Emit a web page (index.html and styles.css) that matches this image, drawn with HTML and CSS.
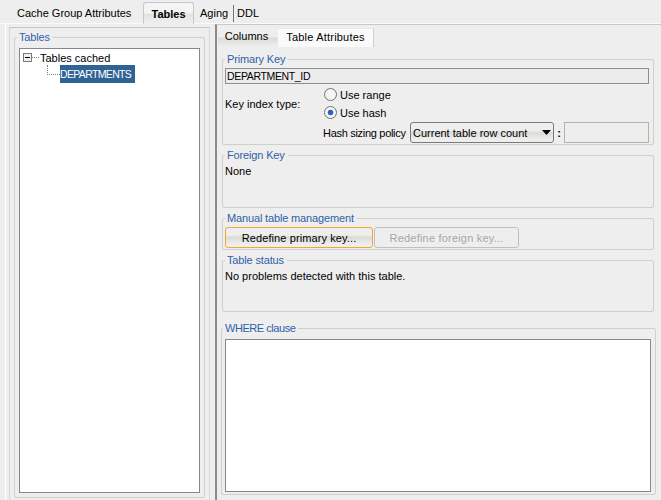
FILE: index.html
```html
<!DOCTYPE html>
<html lang="en">
<head>
  <meta charset="UTF-8">
  <title>Cache Group Attributes</title>
  <link rel="stylesheet" href="styles.css">
</head>
<body>
  <div class="top-tabs">
    <span class="top-tab first">Cache Group Attributes</span>
    <span class="top-tab active">Tables</span>
    <span class="top-tab aging">Aging</span>
    <span class="top-tab ddl">DDL</span>
  </div>

  <div class="main">
    <div class="left-pane">
      <div class="left-inner">
        <fieldset class="group tables-group">
          <legend>Tables</legend>
          <div class="tree">
            <div class="tree-root">
              <span class="expander"></span>
              <span class="dots-h"></span>
              <span>Tables cached</span>
            </div>
            <div class="tree-child">
              <span class="elbow"></span>
              <span class="selected">DEPARTMENTS</span>
            </div>
          </div>
        </fieldset>
      </div>
    </div>

    <div class="right-pane">
      <div class="sub-tabs">
        <span class="sub-tab">Columns</span>
        <span class="sub-tab active">Table Attributes</span>
      </div>

      <fieldset class="group pk-group">
        <legend>Primary Key</legend>
        <div class="pk-field">DEPARTMENT_ID</div>
        <div class="key-type">
          <span class="key-label">Key index type:</span>
          <div class="radios">
            <label class="radio-row"><span class="radio"></span>Use range</label>
            <label class="radio-row"><span class="radio on"></span>Use hash</label>
          </div>
        </div>
        <div class="hash-row">
          <span class="hash-label">Hash sizing policy</span>
          <div class="select">
            <span>Current table row count</span>
            <svg class="arrow" width="9" height="5" viewBox="0 0 9 5"><path d="M0 0h9L4.5 5z" fill="#000"/></svg>
          </div>
          <span class="colon">:</span>
          <div class="hash-input"></div>
        </div>
      </fieldset>

      <fieldset class="group fk-group">
        <legend>Foreign Key</legend>
        <div class="plain">None</div>
      </fieldset>

      <fieldset class="group manual-group">
        <legend>Manual table management</legend>
        <div class="buttons">
          <button class="btn focused">Redefine primary key...</button>
          <button class="btn disabled">Redefine foreign key...</button>
        </div>
      </fieldset>

      <fieldset class="group status-group">
        <legend>Table status</legend>
        <div class="plain">No problems detected with this table.</div>
      </fieldset>

      <fieldset class="group where-group">
        <legend>WHERE clause</legend>
        <div class="where-box"></div>
      </fieldset>
    </div>
  </div>
</body>
</html>
```

FILE: styles.css
```css
* {
  box-sizing: border-box;
}
html, body {
  margin: 0;
  height: 500px;
  overflow: hidden;
}
body {
  background: #eeeeee;
  color: #000;
  font-family: 'Liberation Sans', Arial, sans-serif;
  font-size: 11px;
}

/* outer tabs */
.top-tabs {
  display: flex;
  height: 24px;
  padding-top: 2px;
  border-bottom: 1px solid #fafafa;
}
.top-tab {
  line-height: 23px;
  white-space: nowrap;
}
.first {
  width: 126px;
  padding-left: 17px;
}
.top-tab.active {
  width: 51px;
  margin-left: 17px;
  margin-bottom: -1px;
  font-weight: bold;
  text-align: center;
  border: 1px solid #c8c8c8;
  border-bottom: none;
  border-radius: 3px 3px 0 0;
  background: linear-gradient(#f4f4f4 0, #f4f4f4 45%, #e3e3dd 55%, #eeeeee 90%);
}
.aging {
  margin-left: 6px;
  width: 33px;
}
.ddl {
  border-left: 1px solid #777;
  height: 17px;
  line-height: 17px;
  margin-top: 3px;
  padding-left: 3px;
}

/* panes */
.main {
  display: flex;
  height: 476px;
  padding-left: 5px;
}
.left-pane {
  width: 205px;
  padding: 3px 0 0 3px;
  border-left: 1px solid #fff;
}
.left-inner {
  height: 480px;
  padding-left: 4px;
  border: 1px solid #d8d8d8;
  border-top-color: #c4c4c4;
}
.right-pane {
  flex: 1;
  margin-left: 5px;
  border-left: 2px solid #8a8a8a;
  border-top: 1px solid #c8c8c8;
  padding-left: 4px;
}

/* group boxes */
.group {
  margin: 0;
  padding: 0;
  min-width: 0;
  border: 1px solid #d0d0c8;
  border-radius: 2px;
}
.group legend {
  padding: 0 3px 0 2px;
  margin-left: 0;
  color: #2f62a8;
  line-height: 14px;
  letter-spacing: -0.15px;
}
.tables-group {
  margin-top: 2px;
  width: 191px;
  height: 468px;
  padding: 4px 4px 0;
}
.tables-group legend {
  margin-left: -2px;
}
.tree {
  height: 445px;
  background: #fff;
  border: 1px solid #828790;
  padding: 1px 0 0 3px;
}
.tree-root {
  display: flex;
  align-items: center;
  height: 15px;
}
.expander {
  width: 9px;
  height: 9px;
  border: 1px solid #7a7a7a;
  background: linear-gradient(#000, #000) center / 5px 1px no-repeat, #f0f0f0;
}
.dots-h {
  width: 7px;
  margin: 0 1px 0 0;
  border-top: 1px dotted #808080;
}
.tree-child {
  display: flex;
  height: 18px;
  padding-left: 24px;
}
.elbow {
  width: 13px;
  height: 10px;
  border-left: 1px dotted #808080;
  border-bottom: 1px dotted #808080;
}
.selected {
  background: #2f6396;
  color: #fff;
  width: 75px;
  line-height: 18px;
  white-space: nowrap;
  font-size: 10.5px;
  letter-spacing: -0.65px;
}

/* sub tabs */
.sub-tabs {
  display: flex;
  height: 19px;
  margin-top: 3px;
  margin-left: -3px;
}
.sub-tab {
  width: 60px;
  padding-right: 3px;
  line-height: 17px;
  text-align: center;
  background: linear-gradient(#eeeeee 0, #eeeeee 45%, #dcdcd6 55%, #eeeeee 100%);
}
.sub-tab.active {
  width: 96px;
  padding-right: 0;
  background: #fafafa;
  border-right: 1px solid #d0d0c8;
  border-top: 1px solid #e8e8e8;
  letter-spacing: 0.2px;
}

/* primary key */
.pk-group {
  width: 432px;
  margin: 5px 0 0 1px;
  height: 93px;
  padding: 2px 4px 0 2px;
}
.pk-field {
  height: 16px;
  width: 424px;
  line-height: 15px;
  padding-left: 1px;
  background: #ececec;
  border: 1px solid #8e8e8e;
  font-size: 10.5px;
  letter-spacing: -0.35px;
}
.key-type {
  display: flex;
  align-items: center;
  height: 37px;
  margin-top: 1px;
}
.key-label {
  width: 99px;
}
.radios {
  display: flex;
  flex-direction: column;
}
.radio-row {
  display: flex;
  align-items: center;
  gap: 3px;
  height: 18px;
}
.radio {
  width: 13px;
  height: 13px;
  border-radius: 50%;
  border: 1px solid #6f6f6f;
  background: #f6f6f6;
}
.radio.on {
  background: radial-gradient(circle, #2f62c0 0, #2f62c0 2.5px, #f6f6f6 3.2px);
}
.hash-row {
  display: flex;
  align-items: center;
  height: 21px;
  padding-left: 98px;
}
.hash-label {
  width: 87px;
  white-space: nowrap;
  letter-spacing: -0.3px;
}
.select {
  display: flex;
  align-items: center;
  justify-content: space-between;
  width: 144px;
  height: 21px;
  padding: 0 2px 0 2px;
  border: 1px solid #7a7a7a;
  border-radius: 3px;
  background: linear-gradient(#eeeeee 0, #eeeeee 40%, #dcdcd6 52%, #eeeeee 85%);
}
.colon {
  width: 10px;
  text-align: center;
  font-weight: bold;
}
.hash-input {
  width: 85px;
  height: 21px;
  border: 1px solid #b4b4a4;
}

/* other groups */
.plain {
  padding-top: 1px;
  line-height: 16px;
}
.fk-group {
  width: 432px;
  height: 60px;
  margin: 3px 0 0 1px;
  padding-left: 2px;
}
.manual-group {
  width: 432px;
  height: 39px;
  margin: 3px 0 0 1px;
  padding: 2px 0 0 2px;
}
.buttons {
  display: flex;
  gap: 1px;
}
.btn {
  height: 21px;
  padding: 0;
  font: inherit;
  color: #000;
  border: 1px solid #b0b0b0;
  border-radius: 3px;
  background: linear-gradient(#eeeeee 0, #eeeeee 35%, #dcdcd6 50%, #eeeeee 85%);
}
.btn.focused {
  width: 148px;
  border-color: #f0a830;
  letter-spacing: 0.1px;
}
.btn.disabled {
  width: 145px;
  color: #a8a8a0;
  background: #eeeeee;
  border-color: #c0c0c0;
  letter-spacing: 0.2px;
}
.status-group {
  width: 432px;
  height: 59px;
  margin: 3px 0 0 1px;
  padding-left: 2px;
}
.where-group {
  width: 435px;
  height: 174px;
  margin: 9px 0 0 0;
  padding: 4px 0 0 3px;
}
.where-group legend {
  margin-left: -2px;
  letter-spacing: -0.45px;
}
.where-box {
  width: 426px;
  height: 153px;
  background: #fff;
  border: 1px solid #828790;
}
```
